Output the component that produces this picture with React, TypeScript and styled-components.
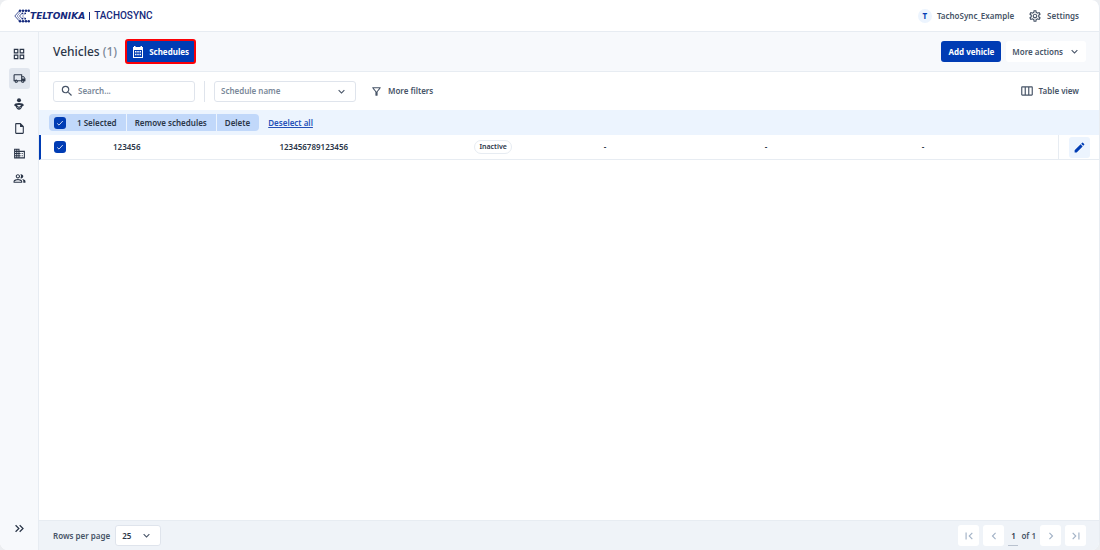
import React from 'react';
import styled, { createGlobalStyle } from 'styled-components';
import {
  MdOutlineGridView,
  MdOutlineLocalShipping,
  MdOutlineInsertDriveFile,
  MdOutlineDomain,
  MdOutlinePeopleAlt,
  MdKeyboardDoubleArrowRight,
  MdOutlineSettings,
  MdSearch,
  MdKeyboardArrowDown,
  MdOutlineFilterAlt,
  MdOutlineViewWeek,
  MdFirstPage,
  MdLastPage,
  MdChevronLeft,
  MdChevronRight,
  MdEdit,
} from 'react-icons/md';

const c = {
  blue: '#003cb4',
  navy: '#14297c',
  ink: '#2b3648',
  text: '#475467',
  muted: '#7a8899',
  line: '#e7ecf2',
  field: '#dfe4ec',
  panel: '#f7f9fc',
  foot: '#eff3f8',
  pale: '#ecf4fe',
  chip: '#c1d8fa',
};

const GlobalStyle = createGlobalStyle`
  *, *::before, *::after { box-sizing: border-box; }
  body { margin: 0; background: #eceef1; }
  body, button, input, select {
    font-family: "Noto Sans", "Open Sans", sans-serif;
    font-size: 8px;
    font-weight: 600;
    line-height: 12px;
    color: ${c.text};
  }
  button { border: 0; padding: 0; background: none; cursor: pointer; }
  svg { display: block; flex: none; }
`;

const Page = styled.div`
  min-height: 100vh;
  display: flex;
  flex-direction: column;
  overflow: hidden;
  background: #fff;
  border-right: 1px solid ${c.line};
  border-radius: 8px;
`;

const Header = styled.header`
  height: 32px;
  flex: none;
  display: flex;
  align-items: center;
  justify-content: space-between;
  padding: 0 20px 0 14px;
  border-bottom: 1px solid ${c.line};
`;

const Brand = styled.a`
  display: flex;
  align-items: center;
  color: ${c.navy};
  text-decoration: none;
`;

const Maker = styled.span`
  font: italic 700 9px/12px "DejaVu Sans", sans-serif;
`;

const Divider = styled.span<{ $h: number; $gap: number; $color: string }>`
  width: 1px;
  height: ${(p) => p.$h}px;
  margin: 0 ${(p) => p.$gap}px;
  background: ${(p) => p.$color};
`;

const Product = styled.span`
  font: 500 10px/12px Roboto, sans-serif;
`;

const Group = styled.div<{ $gap: number }>`
  display: flex;
  align-items: center;
  gap: ${(p) => p.$gap}px;
`;

const TextButton = styled.button`
  display: flex;
  align-items: center;
  gap: 5px;
`;

const Avatar = styled.span`
  width: 14px;
  height: 14px;
  line-height: 14px;
  border-radius: 50%;
  text-align: center;
  font-weight: 700;
  color: ${c.blue};
  background: ${c.pale};
`;

const Body = styled.div`
  flex: 1;
  display: flex;
`;

const Sidebar = styled.nav`
  width: 39px;
  flex: none;
  display: flex;
  flex-direction: column;
  align-items: center;
  gap: 4px;
  padding: 11px 0;
  background: ${c.panel};
  border-right: 1px solid ${c.line};
`;

const NavButton = styled.button<{ $active?: boolean; $end?: boolean }>`
  width: 21px;
  height: 21px;
  display: grid;
  place-items: center;
  border-radius: 3px;
  color: ${c.ink};
  background: ${(p) => (p.$active ? '#e1e6ee' : 'transparent')};
  margin-top: ${(p) => (p.$end ? 'auto' : 0)};
`;

const Main = styled.main`
  flex: 1;
  min-width: 0;
  display: flex;
  flex-direction: column;
`;

const TitleBar = styled.div`
  height: 40px;
  display: flex;
  align-items: center;
  justify-content: space-between;
  padding: 0 13px 0 14px;
  background: ${c.panel};
  border-bottom: 1px solid ${c.line};
`;

const Title = styled.h1`
  margin: 0;
  font-size: 12px;
  line-height: 16px;
  font-weight: 500;
  color: ${c.ink};
  span { color: ${c.muted}; }
`;

const SolidButton = styled.button<{ $marked?: boolean }>`
  display: flex;
  align-items: center;
  gap: 5px;
  height: ${(p) => (p.$marked ? 25 : 21)}px;
  padding: 0 ${(p) => (p.$marked ? 5 : 7)}px;
  border: ${(p) => (p.$marked ? '2px solid #fb0007' : '0')};
  border-radius: 3px;
  color: #fff;
  font-weight: 700;
  background: ${c.blue};
`;

const WhiteButton = styled.button`
  display: flex;
  align-items: center;
  gap: 5px;
  height: 21px;
  padding: 0 5px 0 6px;
  border-radius: 3px;
  background: #fff;
`;

const FilterBar = styled.div`
  height: 38px;
  display: flex;
  align-items: center;
  justify-content: space-between;
  padding: 0 20px 0 14px;
`;

const Field = styled.label<{ $w: number }>`
  width: ${(p) => p.$w}px;
  height: 21px;
  display: flex;
  align-items: center;
  gap: 4px;
  padding: 0 6px;
  border: 1px solid ${c.field};
  border-radius: 3px;
  background: #fff;
  color: ${c.text};
`;

const Input = styled.input`
  flex: 1;
  min-width: 0;
  border: 0;
  padding: 0;
  outline: 0;
  background: none;
  &::placeholder { color: ${c.muted}; opacity: 1; }
`;

const SelectBox = styled.span<{ $w: number }>`
  width: ${(p) => p.$w}px;
  height: 21px;
  display: grid;
  align-items: center;
  border: 1px solid ${c.field};
  border-radius: 3px;
  background: #fff;
  > * { grid-area: 1 / 1; }
  svg { justify-self: end; margin-right: 7px; pointer-events: none; }
`;

const Select = styled.select<{ $muted?: boolean }>`
  width: 100%;
  height: 19px;
  appearance: none;
  border: 0;
  padding: 0 6px;
  background: none;
  color: ${(p) => (p.$muted ? c.muted : c.ink)};
`;

const SelectionBar = styled.div`
  height: 25px;
  display: flex;
  align-items: center;
  gap: 9px;
  padding: 0 10px;
  background: ${c.pale};
`;

const Actions = styled.div`
  height: 17px;
  display: flex;
  border-radius: 4px;
  overflow: hidden;
  background: ${c.chip};
  > * + * { border-left: 1px solid ${c.pale}; }
`;

const Selected = styled.label`
  display: flex;
  align-items: center;
  gap: 11px;
  padding: 0 9px 0 5px;
  color: ${c.ink};
`;

const ActionButton = styled.button`
  padding: 0 9px 0 8px;
  color: ${c.ink};
`;

const Link = styled.a`
  color: #2450b8;
  text-decoration: underline;
`;

const CheckBox = styled.span`
  display: grid;
  width: 12px;
  height: 12px;
  place-items: center;
  border-radius: 3px;
  background: ${c.blue};
  > * { grid-area: 1 / 1; }
  input { appearance: none; width: 12px; height: 12px; margin: 0; }
  svg { pointer-events: none; }
`;

const Table = styled.table`
  width: 100%;
  table-layout: fixed;
  border-collapse: separate;
  border-spacing: 0;
  color: ${c.ink};
`;

const Cell = styled.td<{ $w?: string; $first?: boolean; $last?: boolean }>`
  width: ${(p) => p.$w ?? 'auto'};
  height: 25px;
  padding: ${(p) => (p.$first ? '0 0 0 13px' : p.$last ? '0 0 0 10px' : '0')};
  border-bottom: 1px solid ${c.line};
  border-left: ${(p) => (p.$first ? `2px solid ${c.blue}` : p.$last ? `1px solid ${c.line}` : '0')};
`;

const Badge = styled.span`
  display: inline-block;
  padding: 0 4px;
  border: 1px solid ${c.line};
  border-radius: 7px;
  font-size: 7px;
`;

const EditButton = styled.button`
  width: 21px;
  height: 21px;
  display: grid;
  place-items: center;
  border-radius: 3px;
  color: ${c.blue};
  background: ${c.pale};
`;

const Footer = styled.footer`
  height: 30px;
  margin-top: auto;
  display: flex;
  align-items: center;
  justify-content: space-between;
  padding: 0 13px 0 14px;
  background: ${c.foot};
  border-top: 1px solid ${c.line};
`;

const RowsLabel = styled.label`
  display: flex;
  align-items: center;
  gap: 5px;
`;

const PageButton = styled.button`
  width: 21px;
  height: 21px;
  display: grid;
  place-items: center;
  border-radius: 3px;
  color: #a3b3c7;
  background: #fff;
`;

const PageInput = styled.input`
  width: 10px;
  height: 20px;
  padding: 0;
  border: 0;
  border-bottom: 1px solid #b9c2cf;
  text-align: center;
  background: none;
  color: ${c.ink};
`;

const Check = ({ label }: { label: string }) => (
  <CheckBox>
    <input type="checkbox" defaultChecked aria-label={label} />
    <svg width="8" height="8" viewBox="0 0 8 8" fill="none" stroke="#fff" strokeWidth="0.8">
      <path d="M1.2 4.4 3 6.1 6.8 2" />
    </svg>
  </CheckBox>
);

const LogoMark = () => (
  <svg width="16" height="14" viewBox="0 0 16 14" fill="none" stroke={c.navy}>
    <path d="M5.5 1.8.8 7l4.7 5.200M8.200 4.200 5.500 7l2.700 2.800" strokeWidth="0.8" />
    <path d="M6 1.800H15M6 12.200H15" strokeWidth="0.5" />
    <path d="M6.500 3 3.200 7l3.300 4M10.500 5 8.500 7l2 2" strokeWidth="0.5" />
    <g fill={c.navy} stroke="none">
      <circle cx="6" cy="1.8" r="1.2" />
      <circle cx="9" cy="1.8" r="1.2" />
      <circle cx="12" cy="1.8" r="1.2" />
      <circle cx="14.800" cy="1.8" r="1.2" />
      <circle cx="6" cy="12.2" r="1.2" />
      <circle cx="9" cy="12.2" r="1.2" />
      <circle cx="12" cy="12.2" r="1.2" />
      <circle cx="14.800" cy="12.2" r="1.2" />
      <circle cx="8.5" cy="4.3" r="0.9" />
      <circle cx="11.2" cy="4.3" r="0.9" />
      <circle cx="8.5" cy="9.7" r="0.9" />
      <circle cx="11.2" cy="9.7" r="0.9" />
    </g>
  </svg>
);

const DriverIcon = () => (
  <svg width="12" height="12" viewBox="0 0 24 24" fill="currentColor">
    <circle cx="12" cy="4.5" r="4" />
    <path
      fillRule="evenodd"
      d="M12 10c-5.500 0-9.500 1.600-9.500 4.200 0 1.800 1.500 2.700 3.200 3C6.500 20.800 9 23.500 12 23.500s5.500-2.700 6.300-6.300c1.700-.3 3.200-1.200 3.200-3C21.500 11.600 17.500 10 12 10zM8 14.500c2.500-.8 5.500-.8 8 0l-2.200 2.300h-3.600zM8 18.200l2.800.8v2c-1.300-.4-2.300-1.500-2.800-2.800zm8 0c-.5 1.300-1.500 2.400-2.800 2.800v-2z"
    />
  </svg>
);

const CalendarIcon = () => (
  <svg width="12" height="12" viewBox="0 0 24 24" fill="currentColor">
    <path
      fillRule="evenodd"
      d="M4 0h3v2h10V0h3v2h2v22H2V2h2zM4 8v14h16V8zM6 10h3v3H6zm4.500 0h3v3h-3zm4.500 0h3v3h-3zM6 15.500h3v3H6zm4.500 0h3v3h-3zm4.500 0h3v3h-3z"
    />
  </svg>
);

export default function App() {
  return (
    <>
      <GlobalStyle />
      <Page>
        <Header>
          <Brand href="#">
            <LogoMark />
            <Maker>TELTONIKA</Maker>
            <Divider $h={8} $gap={4} $color={c.navy} />
            <Product>TACHOSYNC</Product>
          </Brand>
          <Group $gap={14}>
            <TextButton>
              <Avatar>T</Avatar>
              TachoSync_Example
            </TextButton>
            <TextButton>
              <MdOutlineSettings size={14} />
              Settings
            </TextButton>
          </Group>
        </Header>
        <Body>
          <Sidebar>
            <NavButton aria-label="Dashboard"><MdOutlineGridView size={14} /></NavButton>
            <NavButton aria-label="Vehicles" $active><MdOutlineLocalShipping size={13} /></NavButton>
            <NavButton aria-label="Drivers"><DriverIcon /></NavButton>
            <NavButton aria-label="Files"><MdOutlineInsertDriveFile size={13} /></NavButton>
            <NavButton aria-label="Companies"><MdOutlineDomain size={13} /></NavButton>
            <NavButton aria-label="Users"><MdOutlinePeopleAlt size={13} /></NavButton>
            <NavButton aria-label="Expand" $end><MdKeyboardDoubleArrowRight size={15} /></NavButton>
          </Sidebar>
          <Main>
            <TitleBar>
              <Group $gap={8}>
                <Title>Vehicles <span>(1)</span></Title>
                <SolidButton $marked>
                  <CalendarIcon />
                  Schedules
                </SolidButton>
              </Group>
              <Group $gap={5}>
                <SolidButton>Add vehicle</SolidButton>
                <WhiteButton>
                  More actions
                  <MdKeyboardArrowDown size={13} />
                </WhiteButton>
              </Group>
            </TitleBar>
            <FilterBar>
              <Group $gap={14}>
                <Group $gap={0}>
                  <Field $w={142}>
                    <MdSearch size={14} />
                    <Input type="text" placeholder="Search..." aria-label="Search" />
                  </Field>
                  <Divider $h={21} $gap={9} $color={c.field} />
                  <SelectBox $w={142}>
                    <Select $muted aria-label="Schedule name">
                      <option>Schedule name</option>
                    </Select>
                    <MdKeyboardArrowDown size={13} />
                  </SelectBox>
                </Group>
                <TextButton>
                  <MdOutlineFilterAlt size={13} />
                  More filters
                </TextButton>
              </Group>
              <TextButton>
                <MdOutlineViewWeek size={14} />
                Table view
              </TextButton>
            </FilterBar>
            <SelectionBar>
              <Actions>
                <Selected>
                  <Check label="Select all" />
                  1 Selected
                </Selected>
                <ActionButton>Remove schedules</ActionButton>
                <ActionButton>Delete</ActionButton>
              </Actions>
              <Link href="#">Deselect all</Link>
            </SelectionBar>
            <Table>
              <tbody>
                <tr>
                  <Cell $first $w="74px"><Check label="Select vehicle" /></Cell>
                  <Cell $w="15.7%">123456</Cell>
                  <Cell $w="18.4%">123456789123456</Cell>
                  <Cell $w="12.2%"><Badge>Inactive</Badge></Cell>
                  <Cell $w="15.2%">-</Cell>
                  <Cell $w="14.8%">-</Cell>
                  <Cell>-</Cell>
                  <Cell $last $w="41px">
                    <EditButton aria-label="Edit"><MdEdit size={13} /></EditButton>
                  </Cell>
                </tr>
              </tbody>
            </Table>
            <Footer>
              <RowsLabel>
                Rows per page
                <SelectBox $w={46}>
                  <Select>
                    <option>25</option>
                  </Select>
                  <MdKeyboardArrowDown size={13} />
                </SelectBox>
              </RowsLabel>
              <Group $gap={4}>
                <PageButton aria-label="First page"><MdFirstPage size={14} /></PageButton>
                <PageButton aria-label="Previous page"><MdChevronLeft size={14} /></PageButton>
                <Group $gap={3}>
                  <PageInput type="text" defaultValue="1" aria-label="Page" />
                  of 1
                </Group>
                <PageButton aria-label="Next page"><MdChevronRight size={14} /></PageButton>
                <PageButton aria-label="Last page"><MdLastPage size={14} /></PageButton>
              </Group>
            </Footer>
          </Main>
        </Body>
      </Page>
    </>
  );
}
